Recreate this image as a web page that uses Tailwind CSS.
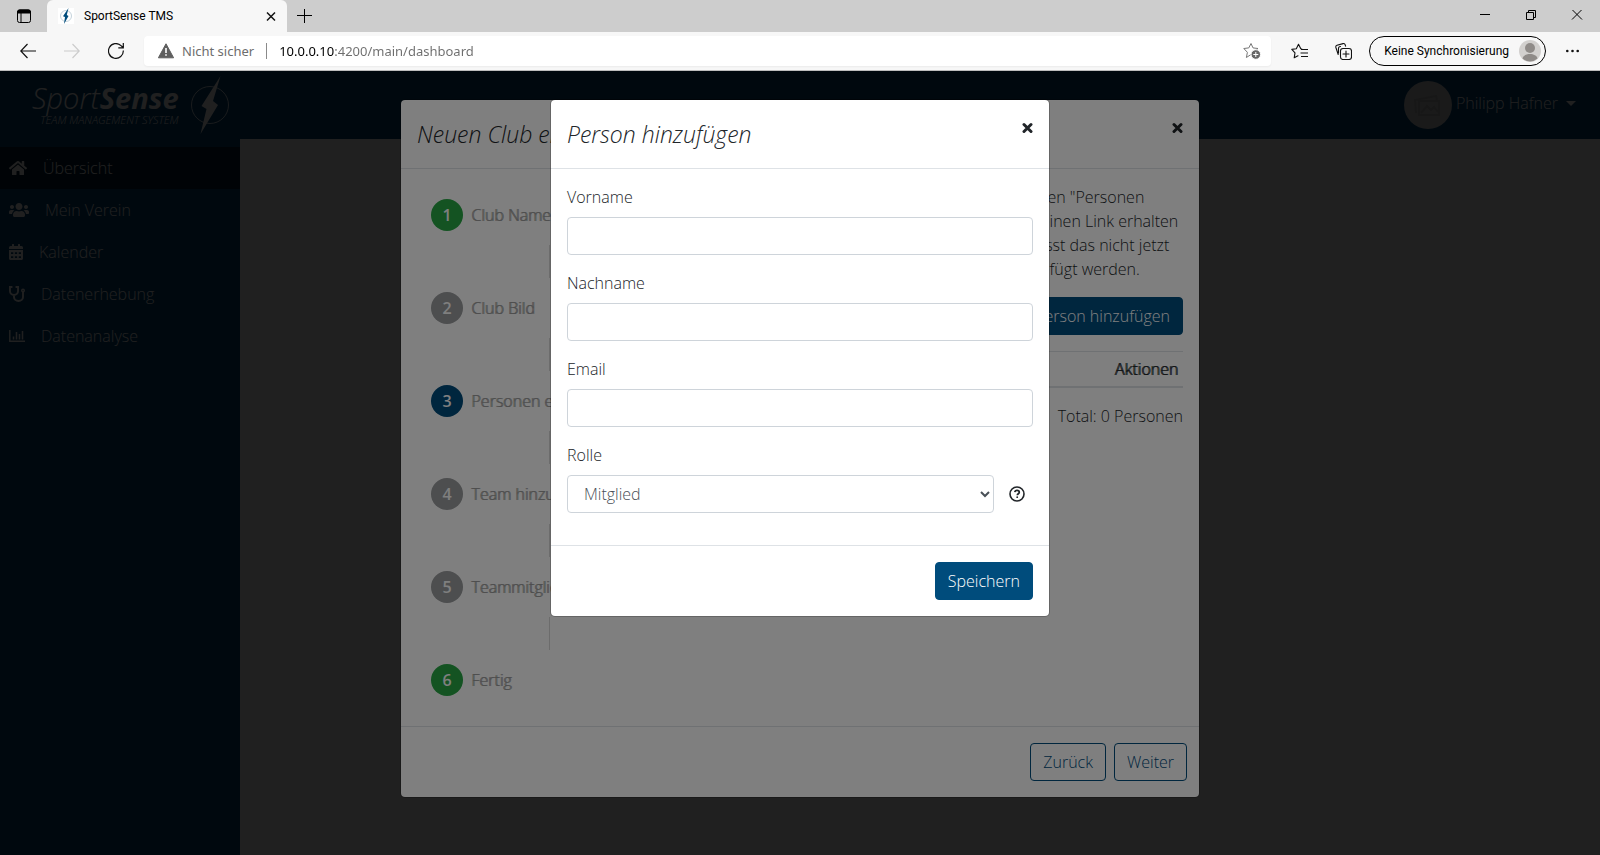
<!DOCTYPE html>
<html lang="de">

<head>
    <meta charset="UTF-8" />
    <meta name="viewport" content="width=device-width, initial-scale=1.0" />
    <title>SportSense TMS</title>
    <script src="https://cdn.jsdelivr.net/npm/@tailwindcss/browser@4"></script>
</head>

<body class="h-screen flex flex-col overflow-hidden bg-white font-['Open_Sans',sans-serif] font-light text-base text-[#212529]">

    <!-- Browser tab strip -->
    <div class="h-8 shrink-0 flex items-stretch bg-[#cdcdcd] font-['Roboto',sans-serif] font-normal text-xs text-black">
        <button class="w-[47px] flex items-center justify-center" aria-label="Tabs">
            <svg class="w-4 h-4" viewBox="0 0 16 16" fill="none" stroke="#000">
                <rect x="1.5" y="2" width="13" height="12.5" rx="2" />
                <path d="M1.5 4V4a2 2 0 0 1 2-2h9a2 2 0 0 1 2 2v1h-13z" fill="#000" />
                <path d="M5 5v9" />
            </svg>
        </button>
        <div class="w-[240px] flex items-center gap-2.5 pl-[11px] pr-2 bg-[#f7f7f7] rounded-t-md">
            <svg class="w-4 h-4 bg-white" viewBox="0 0 16 16">
                <circle cx="8" cy="8" r="5.5" fill="none" stroke="#c5d3dc" />
                <path d="M10.500 0L8.800 7l1.700 1L6 16l1-7-2-.8z" fill="#004c7c" />
            </svg>
            <span class="flex-1">SportSense TMS</span>
            <button class="w-4 h-4" aria-label="Tab schließen">
                <svg viewBox="0 0 16 16" fill="none" stroke="#111" stroke-width="1.500"><path d="M4 4.500l8 8M12 4.500l-8 8" /></svg>
            </button>
        </div>
        <button class="w-9 flex items-center justify-center" aria-label="Neuer Tab">
            <svg class="w-4 h-4" viewBox="0 0 16 16" fill="none" stroke="#000"><path d="M7.500 1v14M0 7.500h15" /></svg>
        </button>
        <div class="ml-auto flex">
            <button class="w-[46px] flex items-center justify-center" aria-label="Minimieren">
                <svg class="w-3 h-3" viewBox="0 0 12 12" fill="none" stroke="#000"><path d="M1 4.500h10" /></svg>
            </button>
            <button class="w-[46px] flex items-center justify-center" aria-label="Wiederherstellen">
                <svg class="w-3 h-3" viewBox="0 0 12 12" fill="none" stroke="#000"><path d="M1.500 2.500h7v7h-7zM3.500 2.500v-2h7v7h-2" /></svg>
            </button>
            <button class="w-[46px] flex items-center justify-center" aria-label="Schließen">
                <svg class="w-3 h-3" viewBox="0 0 12 12" fill="none" stroke="#000"><path d="M1 -.5l10 10M11 -.5L1 9.500" /></svg>
            </button>
        </div>
    </div>

    <!-- Browser toolbar -->
    <div class="h-[39px] shrink-0 flex items-center pl-5 pr-5 bg-[#f7f7f7] border-b border-[#bdbdbd] font-['Noto_Sans',sans-serif] font-normal text-black">
        <div class="flex gap-7">
            <button aria-label="Zurück">
                <svg class="w-4 h-4" viewBox="0 0 16 16" fill="none" stroke="#111" stroke-width="1.200"><path d="M16 8H1M7.500 1L.8 8l6.700 7" /></svg>
            </button>
            <button aria-label="Vorwärts">
                <svg class="w-4 h-4" viewBox="0 0 16 16" fill="none" stroke="#ccc" stroke-width="1.200"><path d="M0 8h15M8.500 1l6.700 7-6.700 7" /></svg>
            </button>
            <button aria-label="Aktualisieren">
                <svg class="w-4 h-4" viewBox="0 0 16 16" fill="none" stroke="#111" stroke-width="1.200"><path d="M15.300 7.500A7.400 7.400 0 1 1 13 2.600l2 1.900M15.300 0v4.800h-5" /></svg>
            </button>
        </div>
        <div class="flex-1 ml-5 h-[30px] flex items-center px-3.5 pr-2.5 bg-white rounded shadow-xs text-sm">
            <svg class="w-4 h-4 shrink-0" viewBox="0 0 16 16">
                <path d="M8 .8L15.600 14.800H.4z" fill="#5f5f5f" stroke="#5f5f5f" stroke-linejoin="round" />
                <path d="M7.200 5h1.600v5H7.200zM7.200 11.200h1.600v1.600H7.200z" fill="#fff" />
            </svg>
            <label for="address" class="ml-2 pr-3 text-[13px] text-[#6d6d6d] whitespace-nowrap">Nicht sicher</label>
            <span class="w-px h-4 bg-[#8a8a8a]"></span>
            <input id="address" type="text" value="10.0.0.10:4200/main/dashboard"
                class="flex-1 min-w-0 ml-3 text-[13px] outline-none text-transparent bg-clip-text bg-[linear-gradient(to_right,#000_55px,#6d6d6d_55px)]" />
            <button aria-label="Zu Favoriten hinzufügen">
                <svg class="w-[18px] h-[18px]" viewBox="0 0 18 18" fill="none" stroke="#777">
                    <path d="M8 1.500l2 4.400 5 .6-3.700 3.300 1 4.200L8 12.500l-4.600 3 1-5.200L.8 6.500l5-.6z" stroke-linejoin="round" />
                    <circle cx="12.800" cy="12.500" r="4.800" fill="#666" stroke="#fff" />
                    <path d="M12.800 10v5M10.300 12.500h5" stroke="#fff" />
                </svg>
            </button>
        </div>
        <div class="ml-5 flex items-center">
            <button aria-label="Favoriten">
                <svg class="w-[17px] h-[17px]" viewBox="0 0 17 17" fill="none" stroke="#111" stroke-width="1.100">
                    <path d="M10.800 6L9.800 5.800 7.500 1.300 5.300 5.800.8 6.400 4 9.800l-.8 5 3.800-2" stroke-linejoin="round" stroke-linecap="round" />
                    <path d="M10 6.500h7M9.500 10h7.500M10 13.500h7" />
                </svg>
            </button>
            <button class="ml-[27px]" aria-label="Sammlungen">
                <svg class="w-[17px] h-[17px]" viewBox="0 0 17 17" fill="none" stroke="#111" stroke-width="1.100">
                    <rect x="5.500" y="5.500" width="11" height="11" rx="2.500" />
                    <path d="M11 8v6M8 11h6M3.200 11.500L.9 4.500C.6 3.400 1 2.600 2 2.300L8 .6c1-.2 1.800.2 2.100 1.100l.5 1.500M3.500 10V5.500c0-1.300.8-2 2-2" stroke-linecap="round" />
                </svg>
            </button>
            <button class="ml-[17px] h-[30px] flex items-center gap-2.5 pl-3.5 pr-1 border border-black rounded-full font-['Roboto',sans-serif] text-xs whitespace-nowrap">
                Keine Synchronisierung
                <svg class="w-[22px] h-[22px]" viewBox="0 0 22 22">
                    <circle cx="11" cy="11" r="11" fill="#d2d0ce" />
                    <circle cx="11" cy="8" r="5" fill="#8f8b88" />
                    <path d="M3.500 18.500c1-6 14-6 15 0a11 11 0 0 1-15 0z" fill="#8f8b88" />
                </svg>
            </button>
            <button class="ml-5" aria-label="Einstellungen">
                <svg class="w-3.5 h-4" viewBox="0 0 14 16" fill="#111"><circle cx="1.300" cy="8" r="1.300" /><circle cx="6.500" cy="8" r="1.300" /><circle cx="11.700" cy="8" r="1.300" /></svg>
            </button>
        </div>
    </div>

    <!-- App -->
    <div class="relative flex-1 min-h-0">
        <div class="h-full flex bg-white text-white">

            <!-- Sidebar -->
            <aside class="w-[240px] shrink-0 bg-[#004374]">
                <a href="#" class="h-[76px] flex items-start gap-3 pl-8 pt-1">
                    <span class="flex flex-col items-end pt-1.5 italic">
                        <span class="text-[29px] leading-[33px]">Sport<b class="font-bold">Sense</b></span>
                        <span class="text-[11px] leading-3 whitespace-nowrap">TEAM MANAGEMENT SYSTEM</span>
                    </span>
                    <svg class="w-[38px] h-[60px] shrink-0" viewBox="0 0 38 60" fill="#fff">
                        <circle cx="19" cy="30" r="18.500" fill="none" stroke="#fff" stroke-width=".8" />
                        <path d="M29.500 1L22 26l5 4L9.500 59l6-25-5-3z" />
                    </svg>
                </a>
                <nav>
                    <a href="#" class="h-[42px] flex items-center gap-4 pl-[9px] bg-[#001d33]">
                        <svg class="w-[18px] h-4" viewBox="0 0 576 512" fill="currentColor"><path d="M280.370 148.260L96 300.110V464a16 16 0 0 0 16 16l112.060-.29a16 16 0 0 0 15.920-16V368a16 16 0 0 1 16-16h64a16 16 0 0 1 16 16v95.640a16 16 0 0 0 16 16.050L464 480a16 16 0 0 0 16-16V300L295.670 148.260a12.190 12.190 0 0 0-15.300 0zM571.600 251.470L488 182.560V44.050a12 12 0 0 0-12-12h-56a12 12 0 0 0-12 12v72.610L318.470 43a48 48 0 0 0-61 0L4.340 251.470a12 12 0 0 0-1.600 16.900l25.500 31A12 12 0 0 0 45.150 301l235.220-193.740a12.190 12.190 0 0 1 15.300 0L530.900 301a12 12 0 0 0 16.900-1.600l25.500-31a12 12 0 0 0-1.700-16.930z" /></svg>
                        Übersicht
                    </a>
                    <a href="#" class="h-[42px] flex items-center gap-4 pl-[9px]">
                        <svg class="w-5 h-4" viewBox="0 0 640 512" fill="currentColor"><path d="M96 224c35.300 0 64-28.700 64-64s-28.700-64-64-64-64 28.700-64 64 28.700 64 64 64zm448 0c35.300 0 64-28.700 64-64s-28.700-64-64-64-64 28.700-64 64 28.700 64 64 64zm32 32h-64c-17.600 0-33.500 7.100-45.100 18.600 40.300 22.100 68.900 62 75.100 109.400h66c17.700 0 32-14.300 32-32v-32c0-35.300-28.700-64-64-64zm-256 0c61.900 0 112-50.100 112-112S381.900 32 320 32 208 82.100 208 144s50.100 112 112 112zm76.800 32h-8.300c-20.800 10-43.900 16-68.500 16s-47.600-6-68.500-16h-8.300C179.600 288 128 339.600 128 403.200V432c0 26.500 21.500 48 48 48h288c26.500 0 48-21.500 48-48v-28.800c0-63.600-51.600-115.200-115.200-115.200zm-223.700-13.400C161.500 263.100 145.600 256 128 256H64c-35.300 0-64 28.700-64 64v32c0 17.700 14.300 32 32 32h65.900c6.300-47.400 34.900-87.300 75.200-109.400z" /></svg>
                        Mein Verein
                    </a>
                    <a href="#" class="h-[42px] flex items-center gap-4 pl-[9px]">
                        <svg class="w-3.5 h-4" viewBox="0 0 448 512" fill="currentColor"><path d="M0 464c0 26.500 21.500 48 48 48h352c26.500 0 48-21.500 48-48V192H0zm64-204h72v56H64zm124 0h72v56h-72zm124 0h72v56h-72zM64 388h72v56H64zm124 0h72v56h-72zm124 0h72v56h-72z" fill-rule="evenodd" /><path d="M400 64h-48V16a16 16 0 0 0-16-16h-32a16 16 0 0 0-16 16v48H160V16a16 16 0 0 0-16-16h-32a16 16 0 0 0-16 16v48H48a48 48 0 0 0-48 48v48h448v-48a48 48 0 0 0-48-48z" /></svg>
                        Kalender
                    </a>
                    <a href="#" class="h-[42px] flex items-center gap-4 pl-[9px]">
                        <svg class="w-4 h-4" viewBox="0 0 512 512" fill="none" stroke="currentColor" stroke-width="62">
                            <path d="M110 31H31v130c0 70 58 127 128 127s130-57 130-127V31h-79M160 288v64c0 74 62 128 144 128s144-60 144-128V190" />
                            <circle cx="448" cy="144" r="40" stroke-width="48" />
                        </svg>
                        Datenerhebung
                    </a>
                    <a href="#" class="h-[42px] flex items-center gap-4 pl-[9px]">
                        <svg class="w-4 h-4" viewBox="0 0 16 16" fill="none" stroke="currentColor" stroke-width="1.500"><path d="M.8 2v11.300H16M4.500 8.500v3M7.500 4v7.500M10.500 6v5.500M13.500 3v8.500" /></svg>
                        Datenanalyse
                    </a>
                </nav>
            </aside>

            <!-- Topbar -->
            <div class="flex-1">
                <header class="h-[68px] flex items-center justify-end px-6 bg-[#004374]">
                    <button class="flex items-center">
                        <svg class="w-12 h-12" viewBox="0 0 48 48">
                            <circle cx="24" cy="24" r="24" fill="#d0d0d0" />
                            <path d="M12 32l-1-13 21-4 1 4M15 20h20v14H15zM17 32l6-7 4 4 3-3 4 5" fill="none" stroke="#bababa" stroke-width="2" />
                        </svg>
                        <span class="pl-1 pb-1">Philipp Hafner</span>
                        <span class="ml-2 mb-1 border-x-5 border-t-5 border-x-transparent border-t-white"></span>
                    </button>
                </header>
            </div>
        </div>

        <div class="absolute inset-0 bg-black/75"></div>

        <!-- Club modal -->
        <div class="absolute inset-x-0 top-7 mx-auto max-w-[800px] bg-white bg-clip-padding border border-black/20 rounded-[5px]">
            <div class="flex items-start justify-between p-4 border-b border-[#dee2e6]">
                <h5 class="text-[23px] leading-9 italic">Neuen Club erstellen</h5>
                <button class="h-6 flex items-center" aria-label="Schließen">
                    <svg class="w-[11px] h-4" viewBox="0 0 11 16" fill="none" stroke="#212529" stroke-width="3" stroke-linecap="round"><path d="M2 4.500l7 7M9 4.500l-7 7" /></svg>
                </button>
            </div>
            <div class="p-4 flex">
                <ol class="w-[264px] shrink-0 pt-3.5 pb-3.5 flex flex-col gap-3.5 text-[#9c9c9c] [text-shadow:1px_0_currentColor]">
                    <li class="flex items-center gap-2 pl-3.5"><span class="w-8 h-8 rounded-full bg-[#28a745] text-white font-semibold text-shadow-none flex items-center justify-center">1</span>Club Name</li>
                    <li class="h-[33px] w-px mx-auto bg-[#d8d8d8]"></li>
                    <li class="flex items-center gap-2 pl-3.5"><span class="w-8 h-8 rounded-full bg-[#9a9c9e] text-white font-semibold text-shadow-none flex items-center justify-center">2</span>Club Bild</li>
                    <li class="h-[33px] w-px mx-auto bg-[#d8d8d8]"></li>
                    <li class="flex items-center gap-2 pl-3.5"><span class="w-8 h-8 rounded-full bg-[#004c7c] text-white font-semibold text-shadow-none flex items-center justify-center">3</span>Personen einladen</li>
                    <li class="h-[33px] w-px mx-auto bg-[#d8d8d8]"></li>
                    <li class="flex items-center gap-2 pl-3.5"><span class="w-8 h-8 rounded-full bg-[#9a9c9e] text-white font-semibold text-shadow-none flex items-center justify-center">4</span>Team hinzufügen</li>
                    <li class="h-[33px] w-px mx-auto bg-[#d8d8d8]"></li>
                    <li class="flex items-center gap-2 pl-3.5"><span class="w-8 h-8 rounded-full bg-[#9a9c9e] text-white font-semibold text-shadow-none flex items-center justify-center">5</span>Teammitglieder</li>
                    <li class="h-[33px] w-px mx-auto bg-[#d8d8d8]"></li>
                    <li class="flex items-center gap-2 pl-3.5"><span class="w-8 h-8 rounded-full bg-[#28a745] text-white font-semibold text-shadow-none flex items-center justify-center">6</span>Fertig</li>
                </ol>
                <div class="flex-1 whitespace-nowrap">
                    <p class="mb-4">
                        Füge Personen zu unserem Club hinzu. Klicke auf den "Personen<br />
                        hinzufügen" Knopf. Diese werden damit per Email einen Link erhalten<br />
                        und können sich damit einfach registrieren. Du musst das nicht jetzt<br />
                        machen, die Personen können auch später hinzugefügt werden.
                    </p>
                    <div class="flex justify-end mb-4">
                        <button class="h-[38px] px-3 rounded bg-[#004c7c] border border-[#004c7c] text-white">Person hinzufügen</button>
                    </div>
                    <table class="w-full mb-4">
                        <thead>
                            <tr class="border-t border-b-2 border-b-[#dee2e6] border-t-[#dee2e6] [text-shadow:1px_0_currentColor]">
                                <th class="p-[5px] text-left font-light">Name</th>
                                <th class="p-[5px] text-right font-light">Aktionen</th>
                            </tr>
                        </thead>
                    </table>
                    <p class="text-right">Total: 0 Personen</p>
                </div>
            </div>
            <div class="flex justify-end gap-2 px-3 py-4 border-t border-[#dee2e6]">
                <button class="h-[38px] px-3 rounded border border-[#004c7c] text-[#004c7c]">Zurück</button>
                <button class="h-[38px] px-3 rounded border border-[#004c7c] text-[#004c7c]">Weiter</button>
            </div>
        </div>

        <div class="absolute inset-0 bg-black/50"></div>

        <!-- Person modal -->
        <form class="absolute inset-x-0 top-7 mx-auto max-w-[500px] bg-white bg-clip-padding border border-black/20 rounded-[5px]">
            <div class="flex items-start justify-between p-4 border-b border-[#dee2e6]">
                <h5 class="text-[23px] leading-9 italic">Person hinzufügen</h5>
                <button type="button" class="h-6 flex items-center" aria-label="Schließen">
                    <svg class="w-[11px] h-4" viewBox="0 0 11 16" fill="none" stroke="#212529" stroke-width="3" stroke-linecap="round"><path d="M2 4.500l7 7M9 4.500l-7 7" /></svg>
                </button>
            </div>
            <div class="p-4">
                <div class="mb-4">
                    <label for="firstname" class="block mb-2">Vorname</label>
                    <input id="firstname" type="text" class="block w-full h-[38px] px-3 border border-[#ced4da] rounded" />
                </div>
                <div class="mb-4">
                    <label for="lastname" class="block mb-2">Nachname</label>
                    <input id="lastname" type="text" class="block w-full h-[38px] px-3 border border-[#ced4da] rounded" />
                </div>
                <div class="mb-4">
                    <label for="email" class="block mb-2">Email</label>
                    <input id="email" type="email" class="block w-full h-[38px] px-3 border border-[#ced4da] rounded" />
                </div>
                <div class="mb-4">
                    <label for="role" class="block mb-2">Rolle</label>
                    <div class="flex items-center">
                        <select id="role" class="flex-1 h-[38px] px-3 bg-white border border-[#ced4da] rounded text-[#495057]">
                            <option>Mitglied</option>
                            <option>Administrator</option>
                        </select>
                        <button type="button" class="mx-[15px] mr-2" aria-label="Hilfe">
                            <svg class="w-4 h-4" viewBox="0 0 16 16" fill="none" stroke="#212529">
                                <circle cx="8" cy="8" r="7" stroke-width="1.600" />
                                <path d="M5.800 6.200C6 4.800 7 4.300 8 4.300c1.300 0 2.300.8 2.300 1.900 0 1.500-2 1.500-2 3" stroke-width="1.700" />
                                <circle cx="8.200" cy="11.200" r=".9" fill="#212529" stroke="none" />
                            </svg>
                        </button>
                    </div>
                </div>
            </div>
            <div class="flex justify-end p-4 border-t border-[#dee2e6]">
                <button type="submit" class="h-[38px] px-3 rounded bg-[#004c7c] border border-[#004c7c] text-white">Speichern</button>
            </div>
        </form>
    </div>

</body>

</html>
